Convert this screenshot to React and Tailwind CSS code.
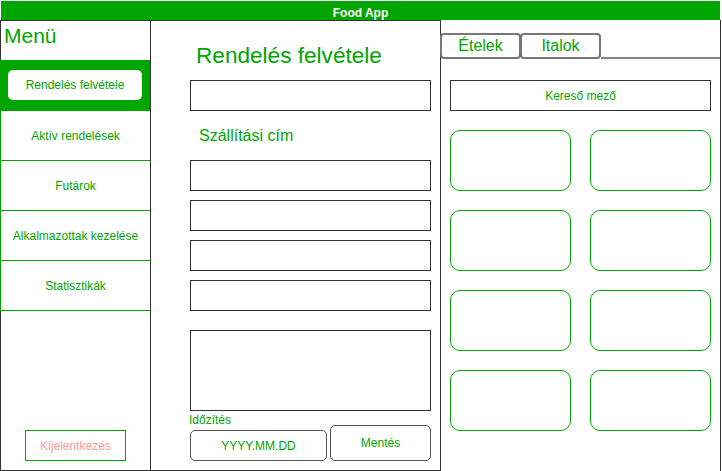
import React from "react";

const green = "text-[#00a600]";

function MenuItem({ label }) {
  return (
    <div className="h-[50px] border-l border-b border-[#00a600] flex items-center justify-center text-[12px] text-[#00a600]">
      {label}
    </div>
  );
}

function Field({ className = "" }) {
  return <div className={`h-[31px] w-[241px] border border-[#333] ${className}`} />;
}

export default function App() {
  const cards = [1, 2, 3, 4, 5, 6, 7, 8];

  return (
    <div
      className="w-[722px] h-[471px] bg-white pt-[1px] flex flex-col overflow-hidden"
      style={{ fontFamily: '"Liberation Sans", Arial, sans-serif' }}
    >
      {/* Top bar */}
      <div className="ml-[1px] w-[719px] h-[19px] bg-[#00a600] flex items-end justify-center pb-[1px]">
        <span className="text-white font-bold text-[12px] leading-none">Food App</span>
      </div>

      <div className="flex flex-1">
        {/* Sidebar */}
        <div className="w-[151px] border-t border-r border-b border-[#333] flex flex-col">
          <div className="h-[39px] border-l border-[#333] pl-[3px] pt-[3px]">
            <span className={`text-[21px] leading-[24px] ${green}`}>Menü</span>
          </div>
          <div className="h-[51px] bg-[#00a600] flex items-center justify-center border-b border-[#00a600]">
            <div className="w-[134px] h-[30px] bg-white rounded-[5px] flex items-center justify-center text-[12px] text-[#00a600]">
              Rendelés felvétele
            </div>
          </div>
          <MenuItem label="Aktív rendelések" />
          <MenuItem label="Futárok" />
          <MenuItem label="Alkalmazottak kezelése" />
          <MenuItem label="Statisztikák" />
          <div className="flex-1 border-l border-[#333] flex flex-col justify-end items-start pl-[24px] pb-[9px]">
            <button className="w-[101px] h-[31px] border border-[#00a600] text-[12px] text-[#ff9a9a] flex items-center justify-center">
              Kijelentkezés
            </button>
          </div>
        </div>

        {/* Order form */}
        <div className="w-[290px] border-t border-r border-b border-[#333] pl-[39px] flex flex-col">
          <h1 className={`mt-[22px] ml-[6px] text-[22.6px] leading-[26px] ${green}`}>Rendelés felvétele</h1>
          <Field className="mt-[11px]" />
          <div className={`mt-[16px] ml-[9px] text-[16px] leading-[18px] ${green}`}>Szállítási cím</div>
          <div className="mt-[15px] flex flex-col gap-[9px]">
            <Field />
            <Field />
            <Field />
            <Field />
          </div>
          <div className="mt-[19px] h-[81px] w-[241px] border border-[#333]" />
          <div className="mt-[2px] flex items-end gap-[3px]">
            <div className="flex flex-col">
              <span className={`-ml-[1px] text-[12px] leading-[14px] ${green}`}>Időzítés</span>
              <button className={`mt-[3px] w-[137px] h-[31px] border border-[#555] rounded-[5px] text-[12px] flex items-center justify-center ${green}`}>
                YYYY.MM.DD
              </button>
            </div>
            <button className={`w-[101px] h-[36px] border border-[#555] rounded-[5px] text-[12px] flex items-center justify-center ${green}`}>
              Mentés
            </button>
          </div>
        </div>

        {/* Products */}
        <div className="w-[280px] border-r border-[#333] flex flex-col">
          <div className="mt-[13px] -ml-[1px] flex items-end">
            <div className={`w-[81px] h-[26px] border-2 border-[#777] rounded-[4px] flex items-center justify-center text-[16px] ${green}`}>
              Ételek
            </div>
            <div className={`-ml-[1px] w-[81px] h-[26px] border-2 border-[#777] rounded-[4px] flex items-center justify-center text-[16px] ${green}`}>
              Italok
            </div>
            <div className="flex-1 border-b-2 border-[#888]" />
          </div>
          <div className="px-[9px]">
            <div className={`mt-[21px] h-[31px] border border-[#333] flex items-center justify-center text-[12px] ${green}`}>
              Kereső mező
            </div>
            <div className="mt-[19px] grid grid-cols-2 gap-x-[19px] gap-y-[19px]">
              {cards.map((c) => (
                <div key={c} className="h-[61px] border border-[#00a600] rounded-[10px]" />
              ))}
            </div>
          </div>
        </div>
      </div>
    </div>
  );
}
